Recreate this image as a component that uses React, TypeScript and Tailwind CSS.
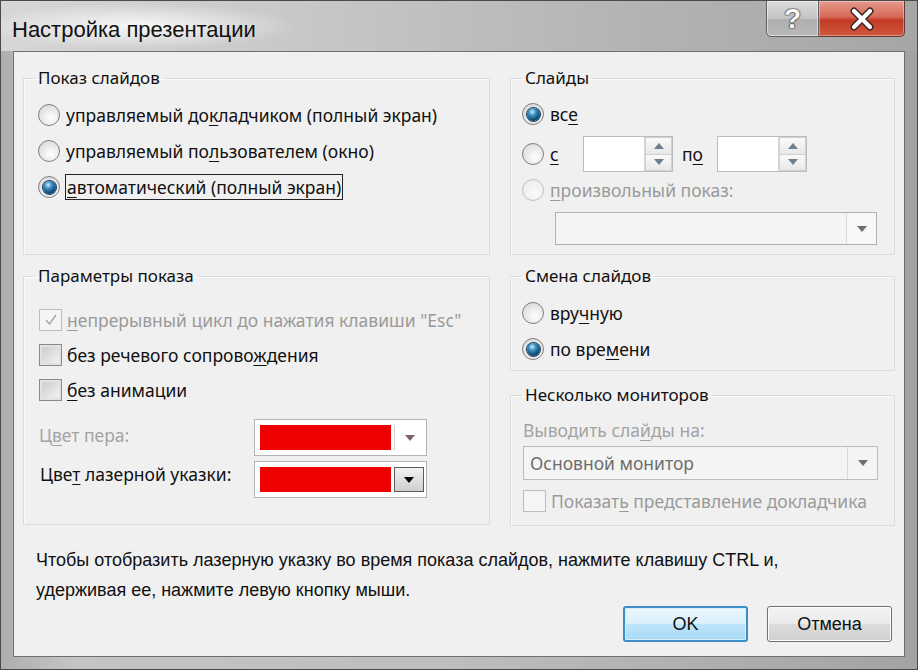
import type { ReactNode } from 'react';

const UI_FONT = "font-['Noto_Sans',_'Open_Sans',_sans-serif]";

function U({ children }: { children: ReactNode }) {
  return <span className="underline decoration-1 underline-offset-[3px]">{children}</span>;
}

function Radio({ checked = false, disabled = false }: { checked?: boolean; disabled?: boolean }) {
  return (
    <div
      className={
        'flex h-[22px] w-[22px] shrink-0 items-center justify-center rounded-full border ' +
        (disabled
          ? 'border-[#c2c2c2] bg-[radial-gradient(circle_at_60%_65%,#fbfbfb,#e6e6e6)]'
          : 'border-[#7f7f7f] bg-[radial-gradient(circle_at_60%_65%,#ffffff,#d2d2d2)]')
      }
    >
      {checked && (
        <div className="h-[13px] w-[13px] rounded-full bg-[radial-gradient(circle_at_40%_30%,#c9ecff_0%,#3d8fc4_30%,#0f4c78_65%,#0a2f4d_100%)] shadow-[0_0_0_1px_#1c3f5c]" />
      )}
    </div>
  );
}

function Checkbox({ checked = false, disabled = false }: { checked?: boolean; disabled?: boolean }) {
  return (
    <div
      className={
        'flex h-[22px] w-[23px] shrink-0 items-center justify-center border ' +
        (disabled
          ? 'border-[#bdbdbd] bg-[#f5f5f5]'
          : 'border-[#8a8a8a] bg-[linear-gradient(135deg,#c9c9c9,#f6f6f6)] shadow-[inset_0_0_0_2px_#e2e2e2]')
      }
    >
      {checked && (
        <svg width="14" height="14" viewBox="0 0 14 14">
          <path d="M2 7 L5.5 11 L12 2" fill="none" stroke="#a4a4a4" strokeWidth="1.4" />
        </svg>
      )}
    </div>
  );
}

function Tri({ up = false, color = '#555' }: { up?: boolean; color?: string }) {
  return (
    <svg width="10" height="6" viewBox="0 0 10 6">
      <polygon points={up ? '0,6 10,6 5,0' : '0,0 10,0 5,6'} fill={color} />
    </svg>
  );
}

function Spinner() {
  return (
    <div className="flex h-[36px] w-[90px] border border-[#b9bcc0] bg-white">
      <div className="flex-1" />
      <div className="flex w-[28px] flex-col border-l border-[#d7d7d7]">
        <div className="flex flex-1 items-center justify-center border border-[#d0d0d0] bg-[linear-gradient(#fafafa,#e8e8e8)]">
          <Tri up color="#6e7f8f" />
        </div>
        <div className="flex flex-1 items-center justify-center border border-t-0 border-[#d0d0d0] bg-[linear-gradient(#fafafa,#e8e8e8)]">
          <Tri color="#6e7f8f" />
        </div>
      </div>
    </div>
  );
}

function ColorPick({ active = false }: { active?: boolean }) {
  return (
    <div className="flex h-[37px] w-[173px] border border-[#b4b4b4] bg-white p-[5px] pr-[2px]">
      <div className="w-[131px] bg-[#f00000]" />
      <div
        className={
          'ml-[3px] flex flex-1 items-center justify-center ' +
          (active
            ? 'border border-[#5a5a5a] bg-[linear-gradient(#f2f2f2,#e0e0e0_50%,#cfcfcf)]'
            : 'border-l border-[#cfcfcf]')
        }
      >
        <Tri color={active ? '#000' : '#7d6464'} />
      </div>
    </div>
  );
}

function Group({ title, className, children }: { title: string; className: string; children: ReactNode }) {
  return (
    <fieldset className={'border border-[#dcdcdc] shadow-[inset_1px_1px_0_#fbfbfb] ' + className}>
      <legend className="ml-[11px] px-[3px] text-[17px] leading-[22px] text-[#111]">{title}</legend>
      {children}
    </fieldset>
  );
}

export default function App() {
  return (
    <div className="flex h-[670px] w-[918px] flex-col overflow-hidden border border-[#4a4a4a] bg-[linear-gradient(90deg,#aeaeae,#c4c4c4_8%,#bdbdbd_50%,#a3a3a3)]">
      {/* Title bar */}
      <div className="relative flex h-[50px] shrink-0 items-center bg-[linear-gradient(90deg,#d6d6d6,#c9c9c9_30%,#b3b3b3_70%,#a6a6a6)]">
        <div className="pointer-events-none absolute left-0 top-[2px] h-[46px] w-[300px] bg-[radial-gradient(ellipse_at_45%_50%,rgba(255,255,255,0.85),rgba(255,255,255,0)_70%)]" />
        <span className="relative ml-[11px] mt-[6px] font-['Liberation_Sans_Narrow',_'Liberation_Sans',_sans-serif] text-[22px] text-[#111]">
          Настройка презентации
        </span>
        <div className="absolute right-[12px] top-[-1px] flex h-[37px]">
          <div className="flex w-[53px] items-center justify-center rounded-bl-[5px] border border-[#5f5f5f] bg-[linear-gradient(#dcdcdc,#c4c4c4_50%,#aeaeae_51%,#b9b9b9)] shadow-[inset_0_0_0_1px_rgba(255,255,255,0.5)]">
            <span className="font-['Liberation_Sans',_sans-serif] text-[28px] font-bold leading-none text-white [text-shadow:0_0_2px_#222,0_0_1px_#222,0_0_1px_#222]">
              ?
            </span>
          </div>
          <div className="flex w-[86px] items-center justify-center rounded-br-[5px] border border-l-0 border-[#5f3a35] bg-[linear-gradient(#e59a8c,#d66a58_45%,#c23a25_55%,#d0583f)] shadow-[inset_0_0_0_1px_rgba(255,255,255,0.35)]">
            <svg width="26" height="24" viewBox="0 0 26 24">
              <path d="M5 4 L21 20 M21 4 L5 20" stroke="#3a2320" strokeWidth="7" strokeLinecap="round" />
              <path d="M5 4 L21 20 M21 4 L5 20" stroke="#fff" strokeWidth="4.2" strokeLinecap="round" />
            </svg>
          </div>
        </div>
      </div>

      {/* Client area */}
      <div className="mx-[12px] mb-[12px] flex flex-1 flex-col border border-[#6f6f6f] bg-[#f0f0f0]">
        <div className={'flex flex-col pl-[9px] pt-[15px] ' + UI_FONT}>
          <div className="flex gap-[20px]">
            <Group title="Показ слайдов" className="h-[188px] w-[467px]">
              <div className="flex flex-col gap-[10px] pl-[14px] pt-[13px] text-[17.5px] text-[#111]">
                <div className="flex h-[26px] items-center gap-[6px]">
                  <Radio />
                  <span>
                    управляемый до<U>к</U>ладчиком (полный экран)
                  </span>
                </div>
                <div className="flex h-[26px] items-center gap-[6px]">
                  <Radio />
                  <span>
                    управляемый по<U>л</U>ьзователем (окно)
                  </span>
                </div>
                <div className="flex h-[26px] items-center gap-[5px]">
                  <Radio checked />
                  <span className="border border-[#222] px-[1px] leading-[24px]">
                    <U>а</U>втоматический (полный экран)
                  </span>
                </div>
              </div>
            </Group>

            <Group title="Слайды" className="h-[188px] w-[385px]">
              <div className="flex flex-col pl-[11px] pt-[13px] text-[17.5px] text-[#111]">
                <div className="flex h-[24px] items-center gap-[6px]">
                  <Radio checked />
                  <span>
                    вс<U>е</U>
                  </span>
                </div>
                <div className="mt-[10px] flex h-[36px] items-center">
                  <div className="flex w-[61px] items-center gap-[6px]">
                    <Radio />
                    <U>с</U>
                  </div>
                  <Spinner />
                  <span className="ml-[9px] w-[35px]">
                    п<U>о</U>
                  </span>
                  <Spinner />
                </div>
                <div className="mt-[6px] flex h-[24px] items-center gap-[6px] text-[#9a9a9a]">
                  <Radio disabled />
                  <span>
                    <U>п</U>роизвольный показ:
                  </span>
                </div>
                <div className="ml-[33px] mt-[10px] flex h-[33px] w-[322px] border border-[#adb2b5] bg-[#f4f4f4]">
                  <div className="flex-1" />
                  <div className="flex w-[30px] items-center justify-center border-l border-[#d9d9d9] bg-[#f7f7f7]">
                    <Tri color="#6d6d6d" />
                  </div>
                </div>
              </div>
            </Group>
          </div>

          <div className="mt-[10px] flex gap-[20px]">
            <Group title="Параметры показа" className="h-[260px] w-[467px]">
              <div className="flex flex-col pl-[15px] pt-[21px] text-[17.5px] text-[#111]">
                <div className="flex h-[24px] items-center gap-[5px] text-[#9a9a9a]">
                  <Checkbox checked disabled />
                  <span>
                    <U>н</U>епрерывный цикл до нажатия клавиши "Esc"
                  </span>
                </div>
                <div className="mt-[11px] flex h-[24px] items-center gap-[5px]">
                  <Checkbox />
                  <span>
                    без речевого сопрово<U>ж</U>дения
                  </span>
                </div>
                <div className="mt-[11px] flex h-[24px] items-center gap-[5px]">
                  <Checkbox />
                  <span>
                    <U>б</U>ез анимации
                  </span>
                </div>
                <div className="mt-[17px] flex items-center">
                  <span className="w-[215px] pb-[4px] text-[#a3a3a3]">
                    Ц<U>в</U>ет пера:
                  </span>
                  <ColorPick />
                </div>
                <div className="mt-[5px] flex items-center">
                  <span className="w-[215px] pb-[10px] pl-[1px]">
                    Цве<U>т</U> лазерной указки:
                  </span>
                  <ColorPick active />
                </div>
              </div>
            </Group>

            <div className="flex w-[385px] flex-col">
              <Group title="Смена слайдов" className="h-[106px] w-[385px]">
                <div className="flex flex-col gap-[12px] pl-[11px] pt-[14px] text-[17.5px] text-[#111]">
                  <div className="flex h-[24px] items-center gap-[6px]">
                    <Radio />
                    <span>
                      вру<U>ч</U>ную
                    </span>
                  </div>
                  <div className="flex h-[24px] items-center gap-[6px]">
                    <Radio checked />
                    <span>
                      по вре<U>м</U>ени
                    </span>
                  </div>
                </div>
              </Group>
              <Group title="Несколько мониторов" className="mt-[13px] h-[142px] w-[385px]">
                <div className="flex flex-col pl-[12px] pt-[13px] text-[17.5px]">
                  <span className="h-[22px] leading-[22px] text-[#a3a3a3]">
                    Выводить сла<U>й</U>ды на:
                  </span>
                  <div className="mt-[5px] flex h-[34px] w-[355px] border border-[#b9bcc0] bg-[#f4f4f4]">
                    <span className="flex-1 pl-[6px] leading-[32px] text-[#6d6d6d]">Основной монитор</span>
                    <div className="flex w-[30px] items-center justify-center border-l border-[#d9d9d9]">
                      <Tri color="#6d6d6d" />
                    </div>
                  </div>
                  <div className="mt-[9px] flex h-[24px] items-center gap-[5px] text-[#9a9a9a]">
                    <Checkbox disabled />
                    <span>
                      Показат<U>ь</U> представление докладчика
                    </span>
                  </div>
                </div>
              </Group>
            </div>
          </div>

          <div className="mt-[19px] pl-[13px] font-['Liberation_Sans_Narrow',_'Liberation_Sans',_sans-serif] text-[18px] leading-[30px] text-[#111]">
            <p>Чтобы отобразить лазерную указку во время показа слайдов, нажмите клавишу CTRL и,</p>
            <p>удерживая ее, нажмите левую кнопку мыши.</p>
          </div>

          <div className="mr-[12px] mt-[1px] flex justify-end gap-[19px] font-['Liberation_Sans_Narrow',_'Liberation_Sans',_sans-serif] text-[18px] text-[#111]">
            <button className="h-[36px] w-[125px] rounded-[3px] border-2 border-[#3c8ec4] bg-[linear-gradient(#eaf6fd,#d9f0fc_50%,#bee6fd_51%,#a7d9f5)] shadow-[inset_0_0_0_1px_#d4eefb]">
              OK
            </button>
            <button className="h-[36px] w-[125px] rounded-[3px] border border-[#707070] bg-[linear-gradient(#f2f2f2,#ebebeb_50%,#dddddd_51%,#cfcfcf)] shadow-[inset_0_0_0_1px_#fcfcfc]">
              Отмена
            </button>
          </div>
        </div>
      </div>
    </div>
  );
}
